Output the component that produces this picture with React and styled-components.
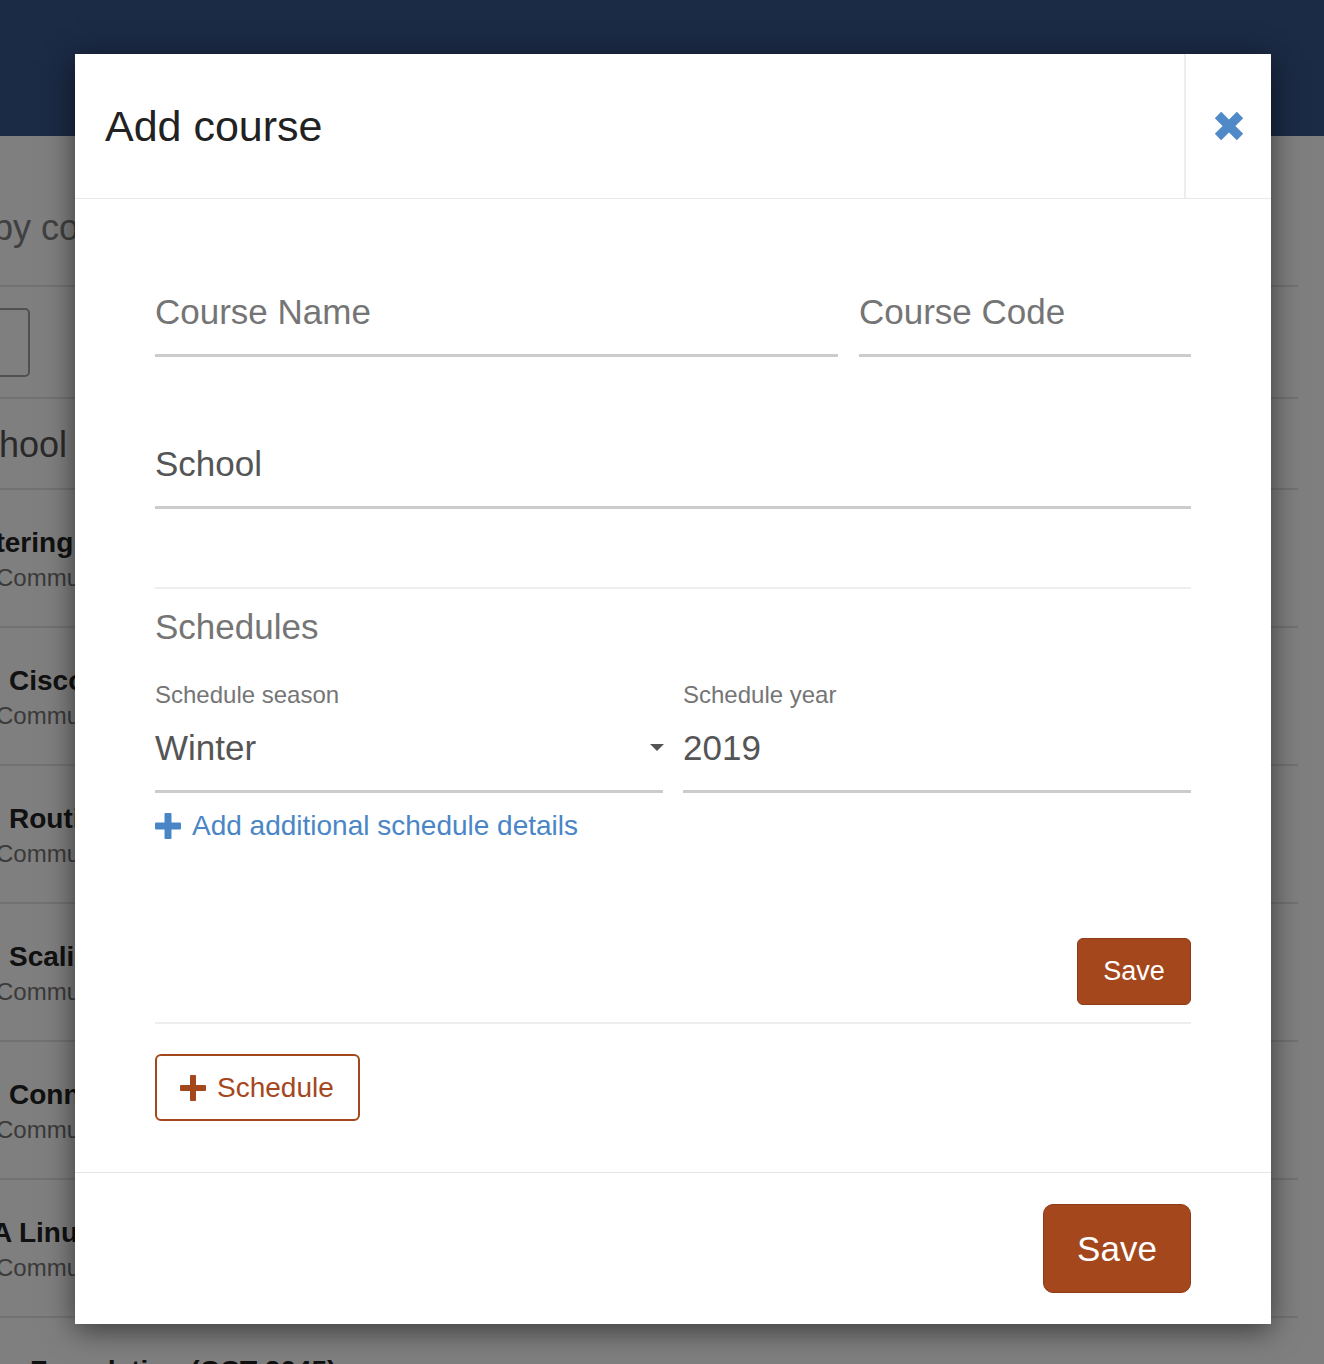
import React from "react";
import styled, { createGlobalStyle } from "styled-components";

const GlobalStyle = createGlobalStyle`
  * { box-sizing: border-box; }
  html, body { margin: 0; padding: 0; }
  body {
    font-family: "Liberation Sans", Arial, Helvetica, sans-serif;
    background: #fff;
  }
`;

const rows = [
  { title: "Mastering Engineering", shift: -59 },
  { title: "Cisco Networking", shift: 9 },
  { title: "Routing and Switching", shift: 9 },
  { title: "Scaling Networks", shift: 9 },
  { title: "Connecting Networks", shift: 9 },
  { title: "A Linux Essentials", shift: -8 },
];

const Page = styled.div`
  position: relative;
  width: 1324px;
  height: 1364px;
  overflow: hidden;
  background: #fff;
`;

const TopBar = styled.header`
  height: 136px;
  background: #37558a;
`;

const List = styled.div`
  width: 1298px;
`;

const Row = styled.div`
  height: ${(p) => p.$h}px;
  padding-top: ${(p) => p.$pt}px;
  border-bottom: 2px solid #e4e4e4;
  white-space: nowrap;
`;

const Heading = styled.div`
  margin-left: ${(p) => p.$shift}px;
  font-size: 36px;
  line-height: 44px;
  color: ${(p) => p.$color};
`;

const GhostBox = styled.div`
  margin-left: -12px;
  width: 42px;
  height: 69px;
  border: 2px solid #a0a0a0;
  border-radius: 5px;
`;

const ItemTitle = styled.div`
  margin-left: ${(p) => p.$shift}px;
  font-size: 28px;
  line-height: 34px;
  font-weight: 700;
  color: #222;
`;

const ItemSub = styled.div`
  margin-top: 3px;
  margin-left: -4px;
  font-size: 24px;
  line-height: 30px;
  color: #757575;
`;

const Backdrop = styled.div`
  position: absolute;
  inset: 0;
  background: rgba(0, 0, 0, 0.5);
`;

const Modal = styled.div`
  position: absolute;
  top: 54px;
  left: 75px;
  width: 1196px;
  background: #fff;
  box-shadow: 0 6px 28px rgba(0, 0, 0, 0.55);
  display: flex;
  flex-direction: column;
`;

const ModalHeader = styled.div`
  display: flex;
  height: 145px;
  border-bottom: 1px solid #e9e9e9;
`;

const Title = styled.h2`
  flex: 1;
  margin: 0;
  padding-left: 30px;
  display: flex;
  align-items: center;
  font-size: 43px;
  font-weight: 400;
  color: #222;
`;

const CloseButton = styled.button`
  width: 87px;
  padding: 0;
  border: none;
  border-left: 2px solid #eee;
  background: none;
  display: flex;
  align-items: center;
  justify-content: center;
  cursor: pointer;
`;

const Body = styled.div`
  padding: 91px 80px 51px;
`;

const FieldRow = styled.div`
  display: grid;
  grid-template-columns: ${(p) => p.$cols};
  gap: 21px;
  margin-top: ${(p) => p.$mt || 0}px;
`;

const TextInput = styled.input`
  display: block;
  width: 100%;
  height: 67px;
  padding: 0 0 21px;
  border: none;
  border-bottom: 3px solid #ccc;
  background: transparent;
  font-family: inherit;
  font-size: 35px;
  line-height: 43px;
  color: #555;
  outline: none;
  &::placeholder {
    color: ${(p) => (p.$dark ? "#555" : "#757575")};
    opacity: 1;
  }
`;

const Divider = styled.div`
  height: 2px;
  background: #eee;
  margin-top: ${(p) => p.$mt}px;
`;

const SectionTitle = styled.h3`
  margin: 17px 0 0;
  font-size: 35px;
  line-height: 42px;
  font-weight: 400;
  color: #757575;
`;

const ScheduleGrid = styled.div`
  display: grid;
  grid-template-columns: 1fr 1fr;
  gap: 20px;
  margin-top: 32px;
`;

const Label = styled.div`
  font-size: 24px;
  line-height: 29px;
  color: #757575;
`;

const ValueBox = styled.div`
  margin-top: 17px;
  height: 67px;
  padding-bottom: 21px;
  border-bottom: 3px solid #ccc;
  display: flex;
  align-items: center;
  justify-content: space-between;
  font-size: 35px;
  line-height: 43px;
  color: #555;
`;

const Caret = styled.span`
  width: 0;
  height: 0;
  margin-right: -1px;
  border-left: 7px solid transparent;
  border-right: 7px solid transparent;
  border-top: 7px solid #555;
`;

const AddLink = styled.a`
  margin-top: 16px;
  display: inline-flex;
  align-items: center;
  gap: 11px;
  font-size: 28px;
  line-height: 34px;
  color: #4a86c6;
  text-decoration: none;
  cursor: pointer;
`;

const ButtonRow = styled.div`
  display: flex;
  justify-content: flex-end;
  margin-top: ${(p) => p.$mt || 0}px;
`;

const SaveButton = styled.button`
  width: ${(p) => (p.$large ? 148 : 114)}px;
  height: ${(p) => (p.$large ? 89 : 67)}px;
  padding: 0;
  border: 1px solid #8e3b17;
  border-radius: ${(p) => (p.$large ? 10 : 6)}px;
  background: #a5471d;
  color: #fff;
  font-family: inherit;
  font-size: ${(p) => (p.$large ? 35 : 27)}px;
  cursor: pointer;
`;

const OutlineButton = styled.button`
  margin-top: 30px;
  height: 67px;
  padding: 0 24px 0 23px;
  display: inline-flex;
  align-items: center;
  gap: 11px;
  border: 2px solid #a5471d;
  border-radius: 6px;
  background: #fff;
  color: #a5471d;
  font-family: inherit;
  font-size: 28px;
  cursor: pointer;
`;

const Footer = styled.div`
  display: flex;
  justify-content: flex-end;
  padding: 31px 80px;
  border-top: 1px solid #e5e5e5;
`;

const PlusIcon = ({ color, t = 7 }) => (
  <svg width="26" height="26" viewBox="0 0 26 26">
    <rect x={(26 - t) / 2} y="0" width={t} height="26" rx="1" fill={color} />
    <rect x="0" y={(26 - t) / 2} width="26" height={t} rx="1" fill={color} />
  </svg>
);

const CloseIcon = () => (
  <svg width="30" height="30" viewBox="0 0 30 30">
    <path d="M4 4 L26 26 M26 4 L4 26" stroke="#4f89c7" strokeWidth="9" />
  </svg>
);

const App = () => {
  return (
    <>
      <GlobalStyle />
      <Page>
        <TopBar />
        <List>
          <Row $h={151} $pt={70}>
            <Heading $shift={-131} $color="#808080">Search by course</Heading>
          </Row>
          <Row $h={112} $pt={21}>
            <GhostBox />
          </Row>
          <Row $h={91} $pt={24}>
            <Heading $shift={-43} $color="#555">School</Heading>
          </Row>
          {rows.map((r) => (
            <Row key={r.title} $h={138} $pt={36}>
              <ItemTitle $shift={r.shift}>{r.title}</ItemTitle>
              <ItemSub>Community College</ItemSub>
            </Row>
          ))}
          <Row $h={60} $pt={36}>
            <ItemTitle $shift={30}>Foundation (CCT 2045)</ItemTitle>
          </Row>
        </List>

        <Backdrop />

        <Modal>
          <ModalHeader>
            <Title>Add course</Title>
            <CloseButton aria-label="Close">
              <CloseIcon />
            </CloseButton>
          </ModalHeader>

          <Body>
            <FieldRow $cols="683px 1fr">
              <TextInput placeholder="Course Name" />
              <TextInput placeholder="Course Code" />
            </FieldRow>
            <FieldRow $cols="1fr" $mt={85}>
              <TextInput placeholder="School" $dark />
            </FieldRow>

            <Divider $mt={78} />

            <SectionTitle>Schedules</SectionTitle>
            <ScheduleGrid>
              <div>
                <Label>Schedule season</Label>
                <ValueBox>
                  <span>Winter</span>
                  <Caret />
                </ValueBox>
              </div>
              <div>
                <Label>Schedule year</Label>
                <ValueBox>
                  <span>2019</span>
                </ValueBox>
              </div>
            </ScheduleGrid>
            <AddLink>
              <PlusIcon color="#4a86c6" />
              Add additional schedule details
            </AddLink>

            <ButtonRow $mt={95}>
              <SaveButton>Save</SaveButton>
            </ButtonRow>

            <Divider $mt={17} />

            <OutlineButton>
              <PlusIcon color="#a5471d" t={6} />
              Schedule
            </OutlineButton>
          </Body>

          <Footer>
            <SaveButton $large>Save</SaveButton>
          </Footer>
        </Modal>
      </Page>
    </>
  );
};

export default App;
